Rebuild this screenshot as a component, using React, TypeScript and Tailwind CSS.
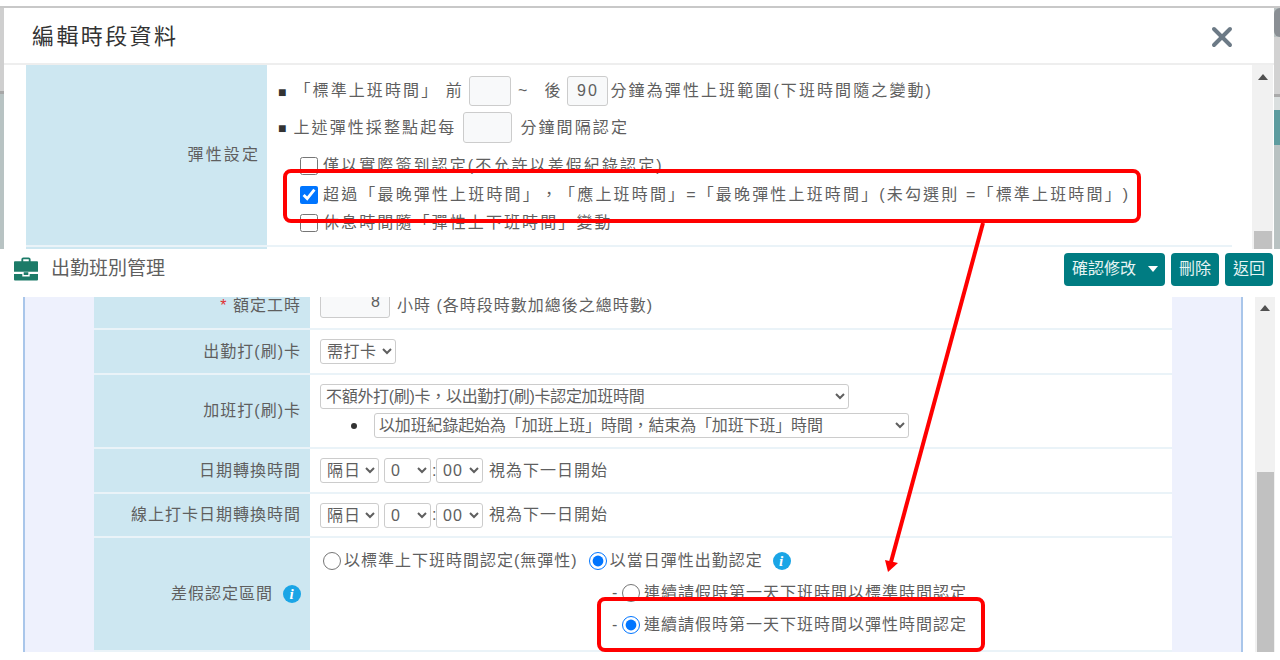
// 編輯時段資料のモーダルと出勤班別管理の画面を重ねた説明用スクリーンショット
import type { ReactNode } from "react";
import { X } from "lucide-react";

const FONT = "[font-family:'Liberation_Sans','Noto_Sans_CJK_TC',sans-serif]";

function ScrollUp() {
  return (
    <svg width="10" height="6" viewBox="0 0 10 6" className="fill-[#505050]">
      <polygon points="5,0 10,6 0,6" />
    </svg>
  );
}

function InfoIcon() {
  return (
    <span className="flex size-[18px] items-center justify-center rounded-full bg-[#1aa5e6] [font-family:'Liberation_Serif',serif] text-[15px] font-bold italic leading-none text-white">
      i
    </span>
  );
}

function Briefcase() {
  return (
    <svg width="24" height="24" viewBox="0 0 26 25" className="fill-[#1c7b68]">
      <path d="M8 5V2.200C8 1 9 0 10.200 0h5.600C17 0 18 1 18 2.200V5h-2V2h-6v3z" />
      <path d="M1 4h24c.6 0 1 .4 1 1v10.500H0V5c0-.6.4-1 1-1z" />
      <path d="M0 18h9v2.500h8V18h9v6c0 .6-.4 1-1 1H1c-.6 0-1-.4-1-1z" />
      <rect x="10.500" y="16" width="5" height="3" />
    </svg>
  );
}

function Select({ options, className }: { options: string[]; className: string }) {
  return (
    <select
      defaultValue={options[0]}
      className={`h-[25px] rounded-[3px] border border-[#cccccc] bg-white text-[#5f5f5f] ${className}`}
    >
      {options.map((o) => (
        <option key={o}>{o}</option>
      ))}
    </select>
  );
}

function Row({ label, className, children }: { label: ReactNode; className: string; children: ReactNode }) {
  return (
    <div className={`flex border-b-2 border-[#eaf3f8] ${className}`}>
      <div className="flex w-[216px] shrink-0 items-center justify-end gap-[10px] bg-[#cde7f1] pr-[9px]">{label}</div>
      <div className="min-w-0 flex-1 pl-[10px]">{children}</div>
    </div>
  );
}

function TimeLine() {
  return (
    <div className="flex h-full items-center">
      <Select options={["隔日"]} className="w-[59px] pl-[2px]" />
      <Select options={["0"]} className="ml-[5px] w-[47px] pl-[2px]" />
      <span className="mx-[1px] w-[3px]">:</span>
      <Select options={["00"]} className="w-[47px] pl-[2px]" />
      <span className="ml-[6px]">視為下一日開始</span>
    </div>
  );
}

function Modal() {
  const check = "size-[18px] shrink-0 accent-[#0075ff]";
  return (
    <div className="flex h-[241px] w-[1270px] flex-col overflow-hidden rounded-t-[12px] bg-white">
      <div className="flex h-[57px] shrink-0 items-center justify-between border-b-2 border-[#eeeeee] pl-[28px] pr-[36px] pt-[2px]">
        <h2 className="text-[22px] tracking-[2.4px] text-[#333333]">編輯時段資料</h2>
        <X className="size-[32px] text-[#6c7a86]" strokeWidth={3} />
      </div>
      <div className="flex min-h-0 flex-1 pl-[22px]">
        <div className="flex w-[1206px] flex-col">
          <div className="flex h-[180px] shrink-0">
            <div className="flex w-[241px] shrink-0 items-center justify-end bg-[#cde7f1] pr-[7px]">彈性設定</div>
            <div className="flex-1 pl-[11px] pt-[11px]">
              <div className="flex h-[30px] items-center">
                <span className="mr-[8px] pt-[2px] text-[14px] tracking-normal text-[#333333]">■</span>
                <span>「標準上班時間」 前</span>
                <input readOnly className="ml-[5px] h-[30px] w-[42px] rounded-[3px] border border-[#cccccc] bg-[#f8f9fa]" />
                <span className="ml-[7px]">~</span>
                <span className="ml-[15px]">後</span>
                <input readOnly defaultValue="90" className="ml-[5px] h-[30px] w-[41px] rounded-[3px] border border-[#cccccc] bg-[#f8f9fa] text-center" />
                <span className="ml-[2px]">分鐘為彈性上班範圍(下班時間隨之變動)</span>
              </div>
              <div className="mt-[6px] flex h-[31px] items-center">
                <span className="mr-[7px] pt-[2px] text-[14px] tracking-normal text-[#333333]">■</span>
                <span>上述彈性採整點起每</span>
                <input readOnly className="ml-[7px] h-[31px] w-[49px] rounded-[3px] border border-[#cccccc] bg-[#f8f9fa]" />
                <span className="ml-[8px]">分鐘間隔認定</span>
              </div>
              <div className="mt-[9px] flex h-[28px] items-center gap-[5px] pl-[22px]">
                <input type="checkbox" className={check} />
                <span>僅以實際簽到認定(不允許以差假紀錄認定)</span>
              </div>
              <div className="flex h-[29px] items-center gap-[5px] pl-[22px]">
                <input type="checkbox" defaultChecked className={check} />
                <span className="whitespace-nowrap tracking-[2.16px]">超過「最晚彈性上班時間」，「應上班時間」=「最晚彈性上班時間」(未勾選則 =「標準上班時間」)</span>
              </div>
              <div className="flex h-[28px] items-center gap-[5px] pl-[22px]">
                <input type="checkbox" className={check} />
                <span>休息時間隨「彈性上下班時間」變動</span>
              </div>
            </div>
          </div>
          <div className="h-[2px] shrink-0 bg-[#eaf3f8]" />
          <div className="w-[241px] flex-1 bg-[#cde7f1]" />
        </div>
        <div className="ml-[20px] flex w-[21px] flex-col items-center bg-[#f1f1f1] pt-[9px]">
          <ScrollUp />
          <div className="mt-auto h-[18px] w-[18px] bg-[#c1c1c1]" />
        </div>
      </div>
    </div>
  );
}

function SideStrip() {
  return (
    <div className="flex w-[6px] flex-col bg-[#b9c2c2]">
      <div className="h-[29px] rounded-l-full bg-[#8a8f94]" />
      <div className="h-[57px] bg-[#d2d2d2]" />
      <div className="h-[3px] bg-[#aaaaaa]" />
      <div className="h-[13px] bg-[#dadfdf]" />
      <div className="h-[35px] bg-[#5d9c9f]" />
      <div className="flex-1" />
    </div>
  );
}

function EditForm() {
  return (
    <div className="flex h-[355px] overflow-hidden">
      <div className="ml-[23px] flex h-full w-[1220px] border-x-2 border-[#a9c6ea] bg-[#eef1fd]">
        <div className="ml-[69px] flex w-[1078px] flex-col overflow-hidden bg-white tracking-[1px]">
          <Row label={<span className="pb-[14px] leading-none"><span className="text-[#e03030]">* </span>額定工時</span>} className="h-[33px] shrink-0 overflow-hidden">
            <div className="flex h-full items-end">
              <input readOnly defaultValue="8" className="mb-[10px] h-[42px] w-[70px] shrink-0 rounded-[3px] border border-[#cccccc] bg-[#f8f9fa] pr-[8px] pt-[10px] text-right" />
              <span className="ml-[7px] pb-[14px] leading-none">小時 (各時段時數加總後之總時數)</span>
            </div>
          </Row>
          <Row label="出勤打(刷)卡" className="h-[45px] shrink-0">
            <div className="flex h-full items-center">
              <Select options={["需打卡"]} className="w-[76px] pl-[2px] tracking-[0.5px]" />
            </div>
          </Row>
          <Row label="加班打(刷)卡" className="h-[74px] shrink-0">
            <div className="flex h-full flex-col justify-center gap-[4px]">
              <Select options={["不額外打(刷)卡，以出勤打(刷)卡認定加班時間"]} className="w-[529px] pl-[1px] tracking-[-0.3px]" />
              <div className="flex items-center">
                <span className="ml-[31px] mr-[17px] size-[6px] rounded-full bg-[#333333]" />
                <Select options={["以加班紀錄起始為「加班上班」時間，結束為「加班下班」時間"]} className="w-[535px] tracking-[-0.15px]" />
              </div>
            </div>
          </Row>
          <Row label="日期轉換時間" className="h-[45px] shrink-0">
            <TimeLine />
          </Row>
          <Row label="線上打卡日期轉換時間" className="h-[44px] shrink-0">
            <TimeLine />
          </Row>
          <Row
            label={
              <>
                <span>差假認定區間</span>
                <InfoIcon />
              </>
            }
            className="h-[114px] shrink-0"
          >
            <div className="flex h-full flex-col pt-[12px]">
              <div className="flex h-[22px] items-center whitespace-nowrap pl-[3px]">
                <input type="radio" name="range" className="size-[18px] accent-[#0075ff]" />
                <span className="ml-[3px]">以標準上下班時間認定(無彈性)</span>
                <input type="radio" name="range" defaultChecked className="ml-[11px] size-[18px] accent-[#0075ff]" />
                <span className="ml-[3px]">以當日彈性出勤認定</span>
                <span className="ml-[10px]"><InfoIcon /></span>
              </div>
              <div className="mt-[10px] flex h-[22px] items-center pl-[292px]">
                <span className="w-[10px]">-</span>
                <input type="radio" name="sub" className="size-[18px] accent-[#0075ff]" />
                <span className="ml-[4px]">連續請假時第一天下班時間以標準時間認定</span>
              </div>
              <div className="mt-[10px] flex h-[22px] items-center pl-[292px]">
                <span className="w-[10px]">-</span>
                <input type="radio" name="sub" defaultChecked className="size-[18px] accent-[#0075ff]" />
                <span className="ml-[4px]">連續請假時第一天下班時間以彈性時間認定</span>
              </div>
            </div>
          </Row>
        </div>
      </div>
      <div className="ml-[12px] flex w-[20px] flex-col items-center bg-[#f1f1f1] pt-[8px]">
        <ScrollUp />
        <div className="mt-auto h-[180px] w-[17px] bg-[#c1c1c1]" />
      </div>
    </div>
  );
}

export default function App() {
  const btn = "h-[33px] rounded-[4px] bg-[#007c82] text-[16px] text-[#e6f4f4]";
  return (
    <div className={`relative h-[660px] w-[1280px] overflow-hidden bg-white text-[16px] text-[#5f5f5f] [text-spacing-trim:space-all] ${FONT}`}>
      {/* 上半分：モーダル */}
      <div className="flex h-[249px] flex-col tracking-[2.1px]">
        <div className="h-[6px] shrink-0 bg-white" />
        <div className="h-[2px] shrink-0 bg-[#c8c8c8]" />
        <div className="flex min-h-0 flex-1">
          <div className="flex w-[4px] flex-col bg-[#b8c3c3]">
            <div className="h-[83px] bg-[#cfcfcf]" />
            <div className="h-[3px] bg-[#a8a8a8]" />
          </div>
          <Modal />
          <SideStrip />
        </div>
      </div>

      {/* 下半分：出勤班別管理 */}
      <div className="flex h-[48px] items-center pb-[8px] pl-[14px] pr-[7px]">
        <Briefcase />
        <h1 className="ml-[13px] text-[19px] text-[#5f5f5f]">出勤班別管理</h1>
        <div className="ml-auto flex gap-[6px]">
          <button type="button" className={`${btn} flex w-[101px] items-center gap-[12px] pl-[8px]`}>
            確認修改
            <span className="size-0 border-x-[5px] border-t-[6px] border-x-transparent border-t-white" />
          </button>
          <button type="button" className={`${btn} w-[48px]`}>刪除</button>
          <button type="button" className={`${btn} w-[48px]`}>返回</button>
        </div>
      </div>
      <EditForm />

      {/* 赤い注釈 */}
      <div className="absolute left-[283px] top-[169px] h-[54px] w-[858px] rounded-[8px] border-4 border-[#ff0000]" />
      <div className="absolute left-[597px] top-[597px] h-[55px] w-[388px] rounded-[8px] border-4 border-[#ff0000]" />
      <svg className="absolute left-0 top-0" width="1280" height="660" viewBox="0 0 1280 660">
        <line x1="983" y1="223" x2="891" y2="562" stroke="#ff0000" strokeWidth="4" />
        <polygon points="885,560 898,563 888,572" fill="#ff0000" />
      </svg>
    </div>
  );
}
